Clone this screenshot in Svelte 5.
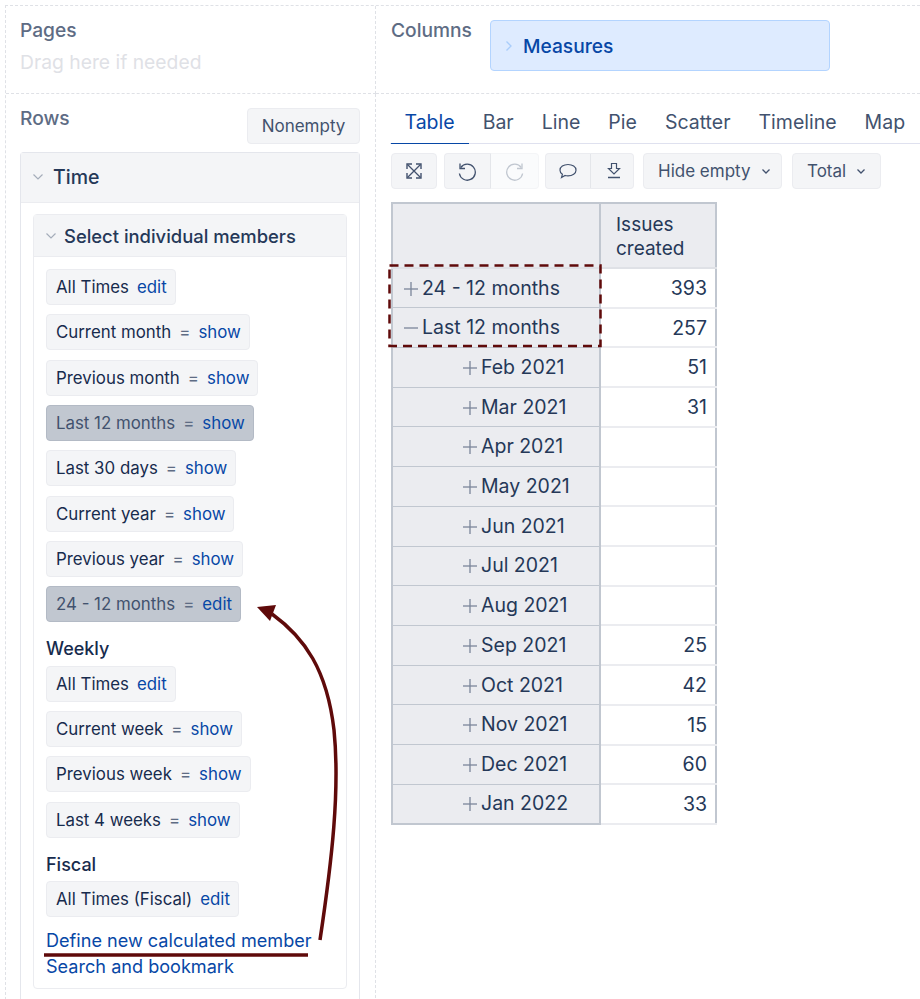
<script>
  const groups = [
    {
      title: '',
      items: [
        { label: 'All Times', link: 'edit' },
        { label: 'Current month', eq: true, link: 'show' },
        { label: 'Previous month', eq: true, link: 'show' },
        { label: 'Last 12 months', eq: true, link: 'show', selected: true },
        { label: 'Last 30 days', eq: true, link: 'show' },
        { label: 'Current year', eq: true, link: 'show' },
        { label: 'Previous year', eq: true, link: 'show' },
        { label: '24 - 12 months', eq: true, link: 'edit', selected: true }
      ]
    },
    {
      title: 'Weekly',
      items: [
        { label: 'All Times', link: 'edit' },
        { label: 'Current week', eq: true, link: 'show' },
        { label: 'Previous week', eq: true, link: 'show' },
        { label: 'Last 4 weeks', eq: true, link: 'show' }
      ]
    },
    {
      title: 'Fiscal',
      items: [{ label: 'All Times (Fiscal)', link: 'edit' }]
    }
  ];

  const tabs = ['Table', 'Bar', 'Line', 'Pie', 'Scatter', 'Timeline', 'Map'];

  const rows = [
    { label: '24 - 12 months', value: '393', level: 0 },
    { label: 'Last 12 months', value: '257', level: 0, open: true },
    { label: 'Feb 2021', value: '51', level: 1 },
    { label: 'Mar 2021', value: '31', level: 1 },
    { label: 'Apr 2021', value: '', level: 1 },
    { label: 'May 2021', value: '', level: 1 },
    { label: 'Jun 2021', value: '', level: 1 },
    { label: 'Jul 2021', value: '', level: 1 },
    { label: 'Aug 2021', value: '', level: 1 },
    { label: 'Sep 2021', value: '25', level: 1 },
    { label: 'Oct 2021', value: '42', level: 1 },
    { label: 'Nov 2021', value: '15', level: 1 },
    { label: 'Dec 2021', value: '60', level: 1 },
    { label: 'Jan 2022', value: '33', level: 1 }
  ];
</script>

<div class="page">
  <div class="grid">
    <section class="zone pages">
      <h3>Pages</h3>
      <div class="hint">Drag here if needed</div>
    </section>

    <section class="zone columns">
      <h3>Columns</h3>
      <div class="measures">
        <svg width="8" height="12" viewBox="0 0 8 12"><path d="M1.500 1.500 6 6l-4.500 4.500" fill="none" stroke="#a9cdfb" stroke-width="1.300" /></svg>
        <span>Measures</span>
      </div>
    </section>

    <section class="zone rows-zone">
      <div class="rows-head">
        <h3>Rows</h3>
        <button class="btn">Nonempty</button>
      </div>
      <div class="panel">
        <div class="panel-head time-head">
          <svg width="12" height="8" viewBox="0 0 12 8"><path d="M1.500 1.500 6 6l4.500-4.500" fill="none" stroke="#a5adba" stroke-width="1.200" /></svg>
          <span>Time</span>
        </div>
        <div class="panel-body">
          <div class="inner">
            <div class="panel-head inner-head">
              <svg width="12" height="8" viewBox="0 0 12 8"><path d="M1.500 1.500 6 6l4.500-4.500" fill="none" stroke="#a5adba" stroke-width="1.200" /></svg>
              <span>Select individual members</span>
            </div>
            <div class="inner-body">
              {#each groups as group}
                {#if group.title}
                  <div class="group-title">{group.title}</div>
                {/if}
                <div class="chips">
                  {#each group.items as item}
                    <div class="chip" class:selected={item.selected}>
                      <span class="chip-label">{item.label}</span>
                      {#if item.eq}<span class="eq">=</span>{/if}
                      <span class="chip-link">{item.link}</span>
                    </div>
                  {/each}
                </div>
              {/each}
              <div class="links">
                <div>Define new calculated member</div>
                <div>Search and bookmark</div>
              </div>
            </div>
          </div>
        </div>
      </div>
    </section>

    <section class="zone report">
      <div class="tabs">
        {#each tabs as tab, i}
          <div class="tab" class:active={i === 0}>{tab}</div>
        {/each}
      </div>

      <div class="toolbar">
        <button class="btn icon-btn solo" aria-label="Fullscreen">
          <svg width="18" height="18" viewBox="0 0 18 18" fill="none" stroke="#42526e" stroke-width="1.300">
            <path d="M2.500 2.500 15.500 15.500M15.500 2.500 2.500 15.500" />
            <path d="M2 7V2h5M11 2h5v5M16 11v5h-5M7 16H2v-5" stroke-width="1.400" />
          </svg>
        </button>
        <div class="btn-group first-group">
          <button class="btn icon-btn undo" aria-label="Undo">
            <svg width="20" height="20" viewBox="0 0 20 20" fill="none" stroke="#42526e" stroke-width="1.300">
              <path d="M3.800 6.500A8 8 0 1 1 2.400 12.500" />
              <path d="M3 2.500V7.500h5" />
            </svg>
          </button>
          <button class="btn icon-btn redo" aria-label="Redo">
            <svg width="20" height="20" viewBox="0 0 20 20" fill="none" stroke="#c1c7d0" stroke-width="1.300">
              <path d="M16.200 6.500A8 8 0 1 0 17.600 12.500" />
              <path d="M17 2.500V7.500h-5" />
            </svg>
          </button>
        </div>
        <div class="btn-group">
          <button class="btn icon-btn comment" aria-label="Comment">
            <svg width="20" height="18" viewBox="0 0 20 18" fill="none" stroke="#42526e" stroke-width="1.200">
              <path d="M10 2.500c4.500 0 8 2.400 8 5.700s-3.500 5.700-8 5.700c-1 0-2-.1-2.900-.4L3.500 15.500l.9-3.200C2.900 11.300 2 9.800 2 8.200 2 4.900 5.500 2.500 10 2.500Z" />
            </svg>
          </button>
          <button class="btn icon-btn export" aria-label="Export">
            <svg width="18" height="20" viewBox="0 0 18 20" fill="none" stroke="#42526e" stroke-width="1.200">
              <path d="M6.500 2.500h5v5h3L9 13 3.500 7.500h3Z" />
              <path d="M3 16.500h12" stroke-width="1.500" />
            </svg>
          </button>
        </div>
        <button class="btn select hide-empty">
          Hide empty
          <svg width="10" height="7" viewBox="0 0 10 7"><path d="M1.500 1.500 5 5l3.500-3.500" fill="none" stroke="#42526e" stroke-width="1.300" /></svg>
        </button>
        <button class="btn select total">
          Total
          <svg width="10" height="7" viewBox="0 0 10 7"><path d="M1.500 1.500 5 5l3.500-3.500" fill="none" stroke="#42526e" stroke-width="1.300" /></svg>
        </button>
      </div>

      <table>
        <thead>
          <tr>
            <th class="corner"></th>
            <th class="measure">Issues<br />created</th>
          </tr>
        </thead>
        <tbody>
          {#each rows as row}
            <tr>
              <th class="member" class:nested={row.level === 1}>
                <span class="toggle">
                  <svg width="14" height="14" viewBox="0 0 14 14" stroke="#7a869a" stroke-width="1.300">
                    <path d="M0 7h14" />
                    {#if !row.open}<path d="M7 0v14" />{/if}
                  </svg>
                </span>{row.label}
              </th>
              <td>{row.value}</td>
            </tr>
          {/each}
        </tbody>
      </table>
    </section>
  </div>

  <!-- annotations: dashed box on the table, arrow and underline on the left -->
  <svg class="arrow" width="920" height="999" viewBox="0 0 920 999" fill="none">
    <rect x="389.500" y="265.500" width="211" height="80.500" stroke="#5f0a0a" stroke-width="2.500" stroke-dasharray="9 6" />
    <path d="M320 940C332 860 340 790 334 730 327 670 305 638 272 614" stroke="#5f0a0a" stroke-width="3.500" />
    <path d="M257 607 276 605 270 621Z" fill="#5f0a0a" />
    <path d="M44 955H308" stroke="#5f0a0a" stroke-width="3.500" />
  </svg>
</div>

<style>
  :global(body) {
    margin: 0;
    background: #fff;
  }

  .page {
    position: relative;
    width: 920px;
    height: 999px;
    overflow: hidden;
    font-family: Inter, 'Liberation Sans', sans-serif;
    color: #172b4d;
  }

  .grid {
    display: grid;
    grid-template-columns: 370px 1fr;
    grid-template-rows: 88px 1fr;
    height: 994px;
    margin: 5px 0 0 5px;
    border-top: 1px dashed #dfe1e6;
    border-left: 1px dashed #dfe1e6;
  }

  .zone {
    box-sizing: border-box;
    min-width: 0;
  }

  .pages {
    padding: 13px 0 0 14px;
    border-right: 1px dashed #dfe1e6;
    border-bottom: 1px dashed #dfe1e6;
  }

  .columns {
    display: flex;
    gap: 18px;
    padding: 13px 0 0 15px;
    border-bottom: 1px dashed #dfe1e6;
  }

  h3 {
    margin: 0;
    font-size: 19.200px;
    line-height: 22px;
    font-weight: 500;
    color: #5e6c84;
  }

  .hint {
    margin-top: 9px;
    font-size: 19.300px;
    line-height: 24px;
    color: #dfe1e6;
  }

  .measures {
    box-sizing: border-box;
    width: 340px;
    height: 51px;
    margin-top: 1px;
    padding-left: 14px;
    display: flex;
    align-items: center;
    gap: 10px;
    background: #deebff;
    border: 1px solid #b3d4ff;
    border-radius: 4px;
    color: #0747a6;
    font-size: 19.200px;
    font-weight: 500;
  }

  .rows-zone {
    padding: 13px 15px 0 14px;
    border-right: 1px dashed #dfe1e6;
  }

  .rows-head {
    display: flex;
    justify-content: space-between;
    align-items: flex-start;
    height: 45px;
  }

  .btn {
    box-sizing: border-box;
    font-family: inherit;
    border: 1px solid #ebecf0;
    border-radius: 4px;
    background: #f4f5f7;
    color: #42526e;
    font-size: 17px;
    padding: 0;
  }

  .rows-head .btn {
    width: 113px;
    height: 36px;
    margin-top: 1px;
  }

  .panel {
    border: 1px solid #e4e6ec;
    border-bottom: 0;
    border-radius: 4px 4px 0 0;
    height: 860px;
  }

  .panel-head {
    display: flex;
    align-items: center;
    background: #f4f5f7;
    border-bottom: 1px solid #ebecf0;
    font-weight: 500;
    color: #253858;
  }

  .time-head {
    box-sizing: border-box;
    height: 50px;
    padding: 0 0 2px 11px;
    gap: 9px;
    font-size: 19.500px;
  }

  .panel-body {
    padding: 11px 12px 0;
  }

  .inner {
    border: 1px solid #ebecf0;
    border-radius: 4px;
    height: 775px;
    box-sizing: border-box;
  }

  .inner-head {
    box-sizing: border-box;
    height: 42px;
    padding-left: 11px;
    gap: 7px;
    font-size: 18.400px;
  }

  .inner-body {
    padding: 12px 12px 0;
  }

  .group-title {
    margin-top: 14.800px;
    margin-bottom: 4.500px;
    font-size: 18px;
    line-height: 24px;
    font-weight: 500;
  }

  .chips {
    display: flex;
    flex-direction: column;
    align-items: flex-start;
    gap: 9.350px;
  }

  .chip {
    box-sizing: border-box;
    height: 36px;
    display: flex;
    align-items: center;
    padding: 0 8px 0 9px;
    background: #f4f5f7;
    border: 1px solid #ebecf0;
    border-radius: 4px;
    font-size: 16.850px;
    white-space: nowrap;
  }

  .chip.selected {
    background: #c1c7d0;
    border-color: #b3bac5;
  }

  .chip.selected .chip-label {
    color: #42526e;
  }

  .eq {
    margin-left: 8px;
    color: #5e6c84;
  }

  .chip-link {
    margin-left: 8px;
    color: #0747a6;
  }

  .links {
    margin-top: 10px;
    font-size: 18.100px;
    line-height: 26px;
    color: #0747a6;
    white-space: nowrap;
  }

  .report {
    position: relative;
    padding: 0 0 0 15px;
  }

  .tabs {
    display: flex;
    height: 50px;
    margin-left: -1px;
    padding: 8px 0 0 0.500px;
    box-sizing: border-box;
    border-bottom: 1px solid #dfe1ef;
    font-size: 19.500px;
    color: #42526e;
  }

  .tab {
    padding: 6px 14px 0;
    margin-bottom: -1px;
    line-height: 28px;
  }

  .tab.active {
    color: #0747a6;
    border-bottom: 1px solid #0747a6;
  }

  .toolbar {
    display: flex;
    gap: 6px;
    margin-top: 9px;
    height: 36px;
  }

  .btn-group {
    display: flex;
  }

  .first-group {
    margin-left: 1px;
  }

  .icon-btn {
    display: flex;
    align-items: center;
    justify-content: center;
    height: 36px;
  }

  .solo {
    width: 46px;
  }

  .undo,
  .comment {
    border-radius: 4px 0 0 4px;
    border-right-color: #e4e6ea;
  }

  .undo {
    width: 47px;
  }

  .undo svg {
    margin-right: 2px;
  }

  .redo {
    width: 48px;
    border-left: 0;
    border-radius: 0 4px 4px 0;
    background: #fafbfc;
    border-color: #f4f5f7;
  }

  .comment {
    width: 46px;
  }

  .export {
    width: 43px;
    border-left: 0;
    border-radius: 0 4px 4px 0;
  }

  .export svg {
    margin-left: 3px;
  }

  .select {
    height: 36px;
    display: flex;
    align-items: center;
    gap: 10px;
    padding-left: 14px;
  }

  .hide-empty {
    width: 139px;
    margin-left: 3px;
  }

  .total {
    width: 89px;
    margin-left: 4px;
  }

  table {
    margin-top: 13px;
    width: 326px;
    table-layout: fixed;
    border-collapse: collapse;
    border: 2px solid #c1c7d0;
    font-size: 19.500px;
  }

  th,
  td {
    box-sizing: border-box;
    padding: 0;
    font-weight: 400;
  }

  .corner {
    width: 208px;
    background: #ebecf0;
    border-right: 2px solid #c1c7d0;
    border-bottom: 2px solid #dfe1e6;
  }

  .measure {
    background: #ebecf0;
    height: 65px;
    padding: 2px 0 0 15px;
    text-align: left;
    font-size: 19px;
    line-height: 24px;
    border-bottom: 2px solid #dfe1e6;
    color: #253858;
  }

  tbody tr {
    height: 39.730px;
  }

  .member {
    background: #ebecf0;
    text-align: left;
    padding-left: 11px;
    border-right: 2px solid #c1c7d0;
    border-bottom: 1px solid #c1c7d0;
    color: #253858;
    white-space: nowrap;
  }

  .member.nested {
    padding-left: 70px;
  }

  .toggle {
    display: inline-block;
    margin-right: 4px;
    vertical-align: -1px;
  }

  td {
    text-align: right;
    padding-right: 8px;
    border-bottom: 2px solid #ebecf0;
    color: #253858;
  }

  .arrow {
    position: absolute;
    left: 0;
    top: 0;
    pointer-events: none;
  }
</style>
